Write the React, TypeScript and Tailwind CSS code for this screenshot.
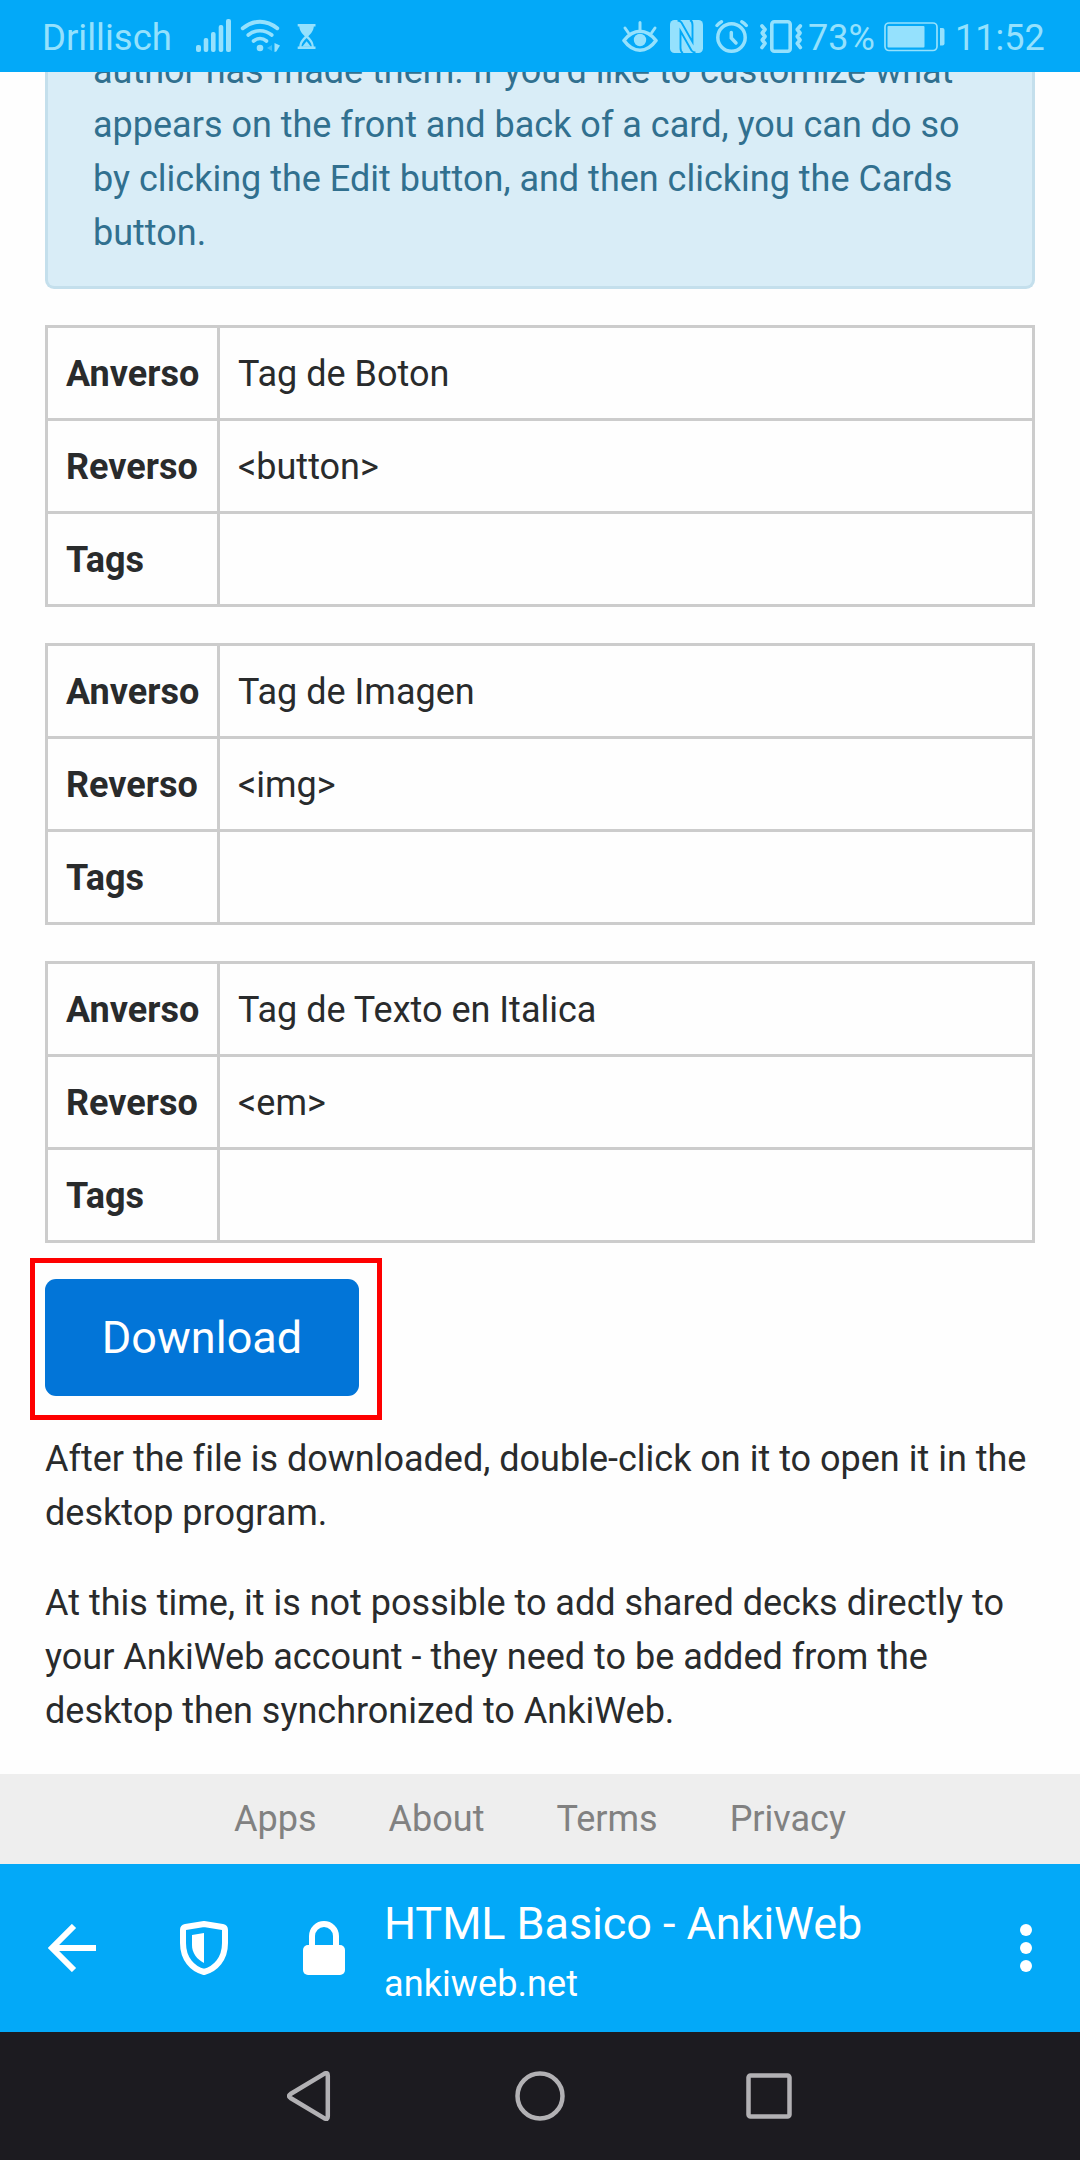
import React from "react";

const cards = [
  { front: "Tag de Boton", back: "<button>" },
  { front: "Tag de Imagen", back: "<img>" },
  { front: "Tag de Texto en Italica", back: "<em>" },
];

function SignalIcon() {
  return (
    <svg className="ml-[24px] h-9 w-9 shrink-0" viewBox="195 18 36 36" fill="currentColor">
      <rect x="196" y="45" width="5" height="7" rx="2" />
      <rect x="203.7" y="38" width="4.6" height="14" rx="2" />
      <rect x="211" y="32" width="4.6" height="20" rx="2" />
      <rect x="218.7" y="25" width="4.6" height="27" rx="2" />
      <rect x="226" y="19" width="5" height="33" rx="2" />
    </svg>
  );
}

function WifiIcon() {
  return (
    <svg className="ml-[9px] h-9 w-10 shrink-0" viewBox="240 18 40 36" fill="none" stroke="currentColor" strokeLinecap="round">
      <path d="M242.8 28.2Q251 21.7 260 21.7T277.2 28.2" strokeWidth="4" />
      <path d="M248.2 35Q253.5 30.700 260 30.700T271.8 35" strokeWidth="3.6" />
      <path d="M253.5 41Q256.5 38.500 260 38.500T266.5 41" strokeWidth="3.6" />
      <circle cx="260" cy="48" r="3.3" fill="currentColor" stroke="none" />
      <path d="M272 45v6l-5-3z" fill="currentColor" stroke="none" opacity=".4" />
      <path d="M274.5 43v9l1.8-.5 3.700-6z" fill="currentColor" stroke="none" />
    </svg>
  );
}

function HourglassIcon() {
  return (
    <svg className="ml-[17px] h-9 w-5 shrink-0" viewBox="297 18 20 36" fill="currentColor">
      <path d="M297.700 24h17.800v2.500h-1.700c-.2 4.500-3 7-5.500 9.800 2.500 2.800 5.300 5.300 5.500 10.200h1.700v2.500h-17.800v-2.500h1.600c.2-4.900 3-7.400 5.500-10.200-2.500-2.800-5.300-5.300-5.500-9.800h-1.600z" />
      <path d="M306.600 38c-2.500 2.500-4.700 4.500-5.200 8.200h10.400c-.5-3.700-2.700-5.700-5.200-8.200z" fill="#03a9f8" />
      <path d="M306.600 41.200l4.200 5.300h-8.400z" />
    </svg>
  );
}

function EyeIcon() {
  return (
    <svg className="h-9 w-9 shrink-0" viewBox="622 18 36 36" fill="none" stroke="currentColor" strokeWidth="3.600" strokeLinecap="round">
      <path d="M624 40.500C629 34 634 31.200 640 31.200s11 2.800 16 9.300C651 47.500 645.500 50.200 640 50.200s-11-2.700-16-9.700z" strokeLinejoin="round" />
      <circle cx="640" cy="40" r="6.200" fill="currentColor" stroke="none" />
      <path d="M640 22.500v7M625 28l3.500 5M655 28l-3.500 5" strokeWidth="3" />
    </svg>
  );
}

function NfcIcon() {
  return (
    <svg className="ml-3 h-9 w-[33px] shrink-0" viewBox="670 18 33 36" fill="none">
      <rect x="670" y="20" width="33" height="33" rx="4.500" fill="currentColor" />
      <path d="M677.500 20.500Q680 20.500 681.500 22.500L692.500 42V25Q692.500 21 690 20M695.500 52.500Q693 52.500 691.500 50.500L680.500 31V48Q680.500 52 683 53" stroke="#03a9f8" strokeWidth="1.900" />
    </svg>
  );
}

function AlarmIcon() {
  return (
    <svg className="ml-3 h-9 w-[34px] shrink-0" viewBox="715 18 34 36" fill="none" stroke="currentColor" strokeWidth="3.500" strokeLinecap="round">
      <circle cx="731.500" cy="37.500" r="13.700" />
      <path d="M717 25.500q2-2.500 4.500-3.800M746.300 25.500q-2-2.500-4.500-3.800" strokeWidth="3.400" />
      <path d="M731.300 32.500v5.500l4.700 5" />
    </svg>
  );
}

function VibrateIcon() {
  return (
    <svg className="ml-[11px] h-9 w-[43px] shrink-0" viewBox="760 18 43 36" fill="none" stroke="currentColor" strokeLinecap="round" strokeLinejoin="round">
      <rect x="771.800" y="21.800" width="18.400" height="29.400" rx="2.500" strokeWidth="3.600" />
      <path d="M762 26l3 3.500-2.700 3.500 2.700 3.500-2.700 3.500 2.700 3.500-3 4M800.300 26l-3 3.500 2.700 3.500-2.700 3.500 2.700 3.500-2.700 3.500 3 4" strokeWidth="3.700" />
    </svg>
  );
}

function BatteryIcon() {
  return (
    <svg className="ml-[10px] h-9 w-[61px] shrink-0" viewBox="884 18 61 36" fill="currentColor">
      <rect x="885" y="23" width="52" height="27.500" rx="4" fill="none" stroke="currentColor" strokeWidth="1.700" />
      <rect x="887.500" y="26" width="37" height="21.500" rx="1" />
      <path d="M940 28h2.500a2 2 0 0 1 2 2v13.500a2 2 0 0 1-2 2H940z" />
    </svg>
  );
}

function StatusBar() {
  return (
    <header className="flex h-[72px] w-full shrink-0 items-center bg-[#03a9f8] pl-[42px] text-[36px] text-[#95e1fd]">
      <span className="w-[129px] pt-[4px] text-[36.5px] leading-[40px] whitespace-nowrap">Drillisch</span>
      <SignalIcon />
      <WifiIcon />
      <HourglassIcon />
      <div className="ml-auto flex items-center pr-[36px]">
        <EyeIcon />
        <NfcIcon />
        <AlarmIcon />
        <VibrateIcon />
        <span className="ml-[5px] w-[66px] pt-[4px] leading-[40px] whitespace-nowrap">73%</span>
        <BatteryIcon />
        <span className="ml-[10px] w-[89px] pt-[4px] leading-[40px] whitespace-nowrap">11:52</span>
      </div>
    </header>
  );
}

function CardTable({ front, back }: { front: string; back: string }) {
  const rows = [
    ["Anverso", front],
    ["Reverso", back],
    ["Tags", ""],
  ];
  return (
    <div className="flex flex-col gap-[3px] border-[3px] border-[#cccccc] bg-[#cccccc]">
      {rows.map(([label, value]) => (
        <div key={label} className="flex h-[90px] gap-[3px]">
          <div className="w-[169px] bg-[#fefefe] px-[18px] pt-[19px] font-bold whitespace-nowrap">{label}</div>
          <div className="flex-1 bg-[#fefefe] px-[18px] pt-[19px]">{value}</div>
        </div>
      ))}
    </div>
  );
}

function BrowserBar() {
  return (
    <div className="flex h-[168px] shrink-0 bg-[#03a9f8] text-white">
      <div className="flex w-[384px] items-center">
        <svg className="ml-12 h-12 w-12" viewBox="0 0 48 48" fill="none" stroke="currentColor" strokeWidth="6">
          <path d="M48 24H5M26 2L4 24l22 22" />
        </svg>
        <svg className="ml-[84px] h-[54px] w-12" viewBox="0 0 48 54" fill="none">
          <path d="M24 3L42.500 6Q45 6.500 45 9v13C45 38 35.500 48 24 51 12.500 48 3 38 3 22V9Q3 6.500 5.500 6z" stroke="currentColor" strokeWidth="6" strokeLinejoin="round" />
          <path d="M24 12v30C17 38.500 12 32 12 24V14z" fill="currentColor" />
        </svg>
        <svg className="ml-[75px] h-[54px] w-[42px]" viewBox="0 0 42 54" fill="none">
          <path d="M9 27V15a12 12 0 0 1 24 0v12" stroke="currentColor" strokeWidth="6" />
          <rect y="24" width="42" height="30" rx="5" fill="currentColor" />
        </svg>
      </div>
      <div className="flex flex-1 flex-col pt-[32px]">
        <span className="text-[45px] leading-[56px] tracking-[-0.09px]">HTML Basico - AnkiWeb</span>
        <span className="text-[36px] leading-[64px] tracking-[0.1px]">ankiweb.net</span>
      </div>
      <div className="mr-12 flex flex-col items-center justify-center gap-[6px]">
        <span className="size-3 rounded-full bg-white" />
        <span className="size-3 rounded-full bg-white" />
        <span className="size-3 rounded-full bg-white" />
      </div>
    </div>
  );
}

function NavBar() {
  return (
    <nav className="flex h-32 shrink-0 items-center bg-[#1c1b20] text-[#b2b1b4]">
      <svg className="ml-[287px] h-[50px] w-[44px]" viewBox="0 0 44 50" fill="none" stroke="currentColor" strokeWidth="4.500" strokeLinejoin="round">
        <path d="M37.500 2.600Q40.800 1 40.800 4.500v41q0 3.500-3.300 1.900L3.500 27q-3-2 0-4z" />
      </svg>
      <svg className="ml-[184px] size-[50px]" viewBox="0 0 50 50" fill="none" stroke="currentColor" strokeWidth="4.500">
        <circle cx="25" cy="25" r="22.500" />
      </svg>
      <svg className="ml-[181px] size-[46px]" viewBox="0 0 46 46" fill="none" stroke="currentColor" strokeWidth="4.500">
        <rect x="2.500" y="2.500" width="41" height="41" rx="2" />
      </svg>
    </nav>
  );
}

export default function App() {
  return (
    <div className="flex h-[2160px] w-[1080px] flex-col overflow-hidden bg-[#fefefe] font-[Roboto,sans-serif] text-[36px] leading-[54px] text-[#292b2c] [font-variant-ligatures:none]">
      <StatusBar />
      <main className="flex h-[1702px] shrink-0 flex-col overflow-hidden px-[45px]">
        <div className="-mt-[28px] rounded-b-[9px] border-[3px] border-t-0 border-[#c4dfec] bg-[#d9edf7] pb-[26px] pl-[45px] text-[#31708f]">
          <p className="whitespace-nowrap">
            author has made them. If you'd like to customize what
            <br />
            appears on the front and back of a card, you can do so
            <br />
            by clicking the Edit button, and then clicking the Cards
            <br />
            button.
          </p>
        </div>
        <div className="mt-9 flex flex-col gap-9">
          {cards.map((c) => (
            <CardTable key={c.back} front={c.front} back={c.back} />
          ))}
        </div>
        <div className="relative mt-9 self-start">
          <button className="block h-[117px] w-[314px] rounded-[11px] bg-[#0275d8] text-[45px] text-white">Download</button>
          <div className="pointer-events-none absolute -top-[21px] -left-[15px] h-[162px] w-[352px] border-[5px] border-[#fe0000]" />
        </div>
        <div className="mt-9 flex flex-col gap-9 whitespace-nowrap">
          <p>
            After the file is downloaded, double-click on it to open it in the
            <br />
            desktop program.
          </p>
          <p>
            At this time, it is not possible to add shared decks directly to
            <br />
            your AnkiWeb account - they need to be added from the
            <br />
            desktop then synchronized to AnkiWeb.
          </p>
        </div>
      </main>
      <footer className="flex h-[90px] shrink-0 items-center justify-center gap-[72px] bg-[#eeeeee] text-[#818181]">
        <a>Apps</a>
        <a>About</a>
        <a>Terms</a>
        <a>Privacy</a>
      </footer>
      <BrowserBar />
      <NavBar />
    </div>
  );
}
